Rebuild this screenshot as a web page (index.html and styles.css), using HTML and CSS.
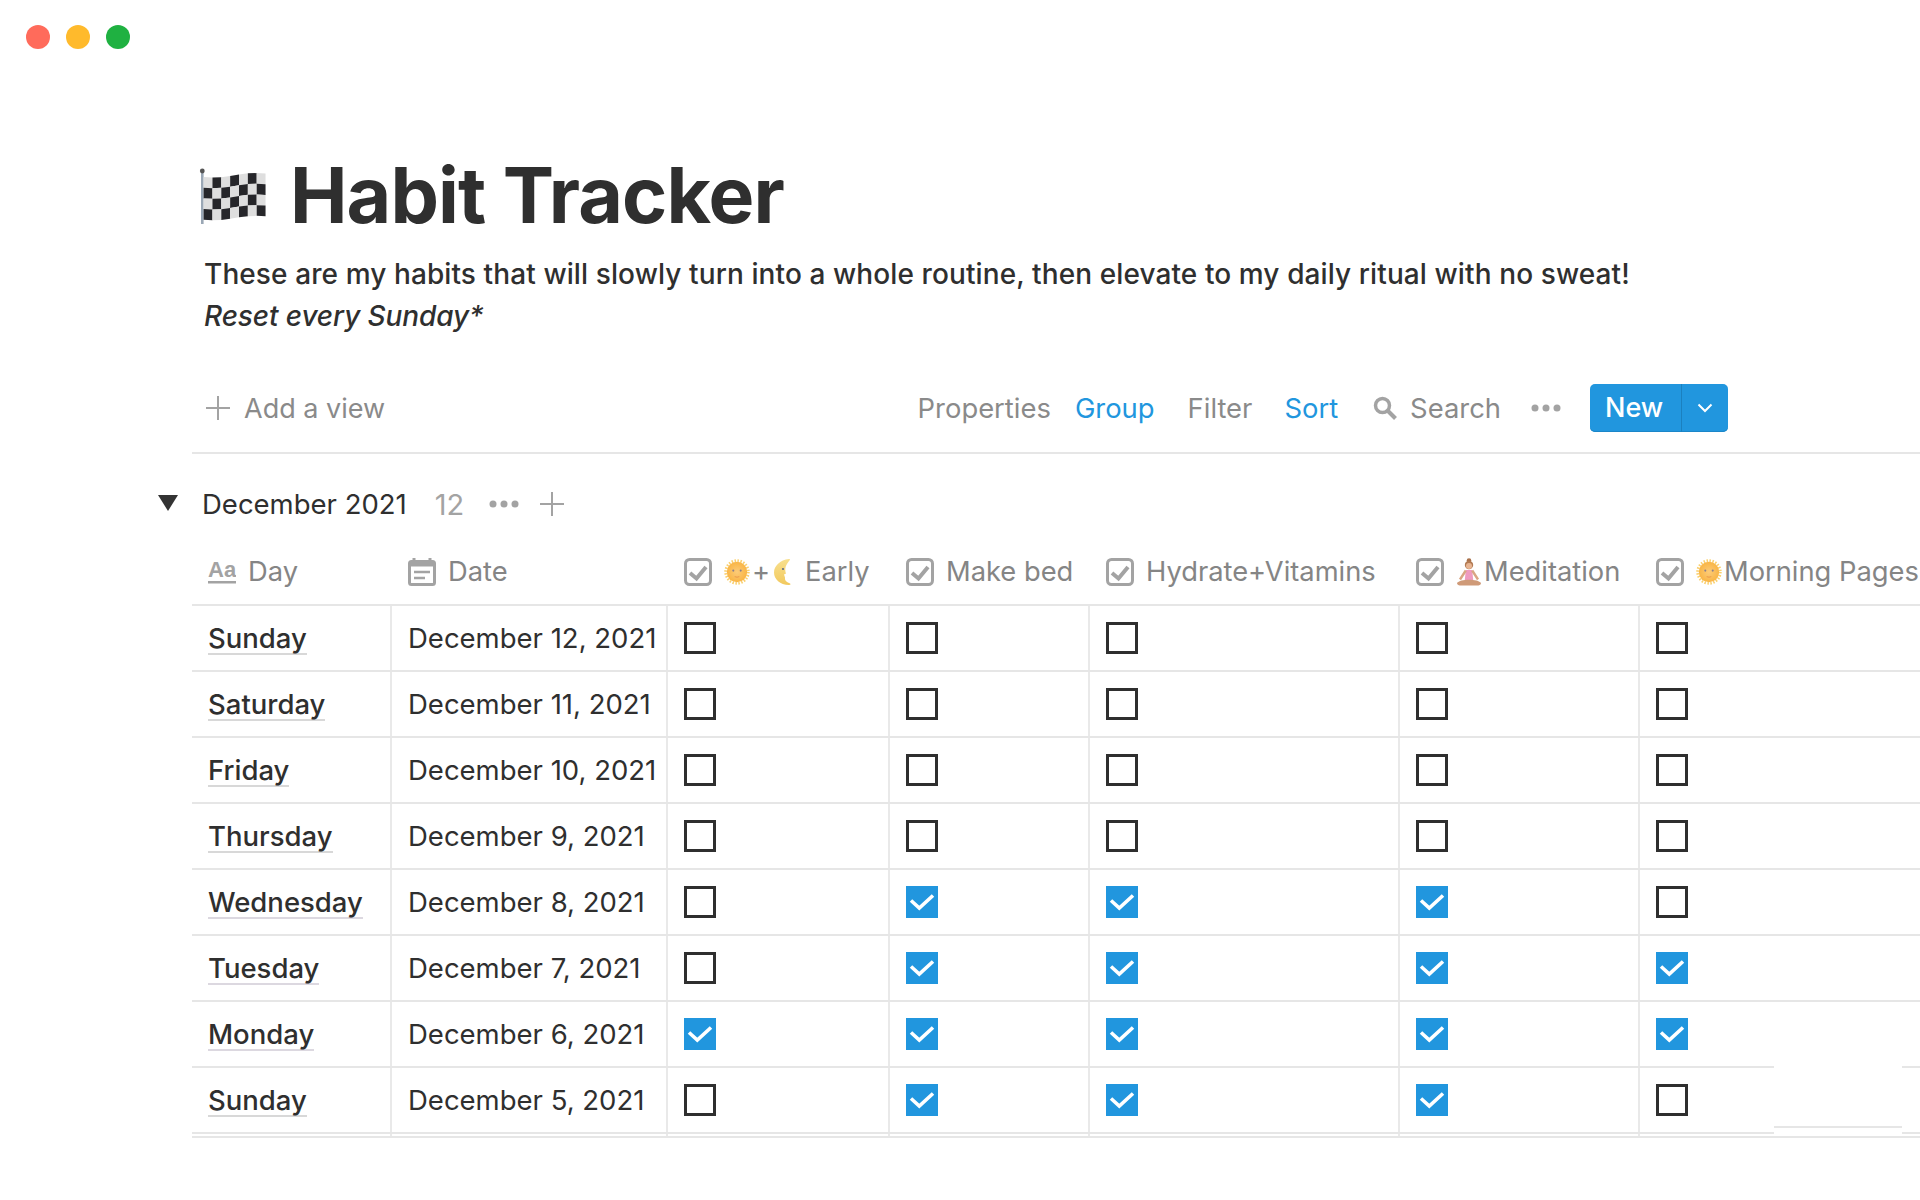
FILE: index.html
```html
<!DOCTYPE html>
<html lang="en">
<head>
    <meta charset="UTF-8" />
    <title>Habit Tracker</title>
    <link rel="stylesheet" href="styles.css">
</head>
<body>
    <svg class="defs" width="0" height="0">
        <defs>
            <radialGradient id="sun-fill">
                <stop offset="0" stop-color="#fccb78"/>
                <stop offset="1" stop-color="#f9b545"/>
            </radialGradient>
            <linearGradient id="moon-fill" x1="0" y1="0" x2="0" y2="1">
                <stop offset="0" stop-color="#f8e08e"/>
                <stop offset="1" stop-color="#f2c95e"/>
            </linearGradient>
            <symbol id="sun" viewBox="0 0 28 28">
                <circle cx="14" cy="14" r="12.200" fill="none" stroke="#fad06e" stroke-width="3" stroke-dasharray="1.600 1.600"/>
                <circle cx="14" cy="14" r="11" fill="url(#sun-fill)"/>
                <circle cx="10" cy="12.500" r="1.100" fill="#8c7f8c"/>
                <circle cx="18" cy="12.500" r="1.100" fill="#8c7f8c"/>
                <path d="M11.500 19q2.500 1.200 5 0" stroke="#e8964a" stroke-width="1" fill="none"/>
            </symbol>
            <symbol id="prop-check" viewBox="0 0 28 28">
                <rect x="1.500" y="1.500" width="25" height="25" rx="4" fill="none" stroke="#a3a3a3" stroke-width="3"/>
                <path d="M6 15l6.500 5.500L22 9" fill="none" stroke="#a3a3a3" stroke-width="4"/>
            </symbol>
            <symbol id="tick" viewBox="0 0 32 32">
                <path d="M5 14.500l8.300 7.500L27 9.500" fill="none" stroke="#fff" stroke-width="3.600"/>
            </symbol>
            <symbol id="plus" viewBox="0 0 24 24">
                <path d="M12 0v24M0 12h24" stroke="#a3a3a3" stroke-width="2"/>
            </symbol>
            <symbol id="dots" viewBox="0 0 30 8">
                <circle cx="4" cy="4" r="3.500" fill="#a3a3a3"/>
                <circle cx="15" cy="4" r="3.500" fill="#a3a3a3"/>
                <circle cx="26" cy="4" r="3.500" fill="#a3a3a3"/>
            </symbol>
        </defs>
    </svg>

    <div class="traffic">
        <span class="light red"></span>
        <span class="light yellow"></span>
        <span class="light green"></span>
    </div>

    <header class="page-head">
        <h1 class="title">
            <svg class="flag" id="flag" viewBox="0 0 67 56"></svg>
            <span>Habit Tracker</span>
        </h1>
        <p class="desc first">These are my habits that will slowly turn into a whole routine, then elevate to my daily ritual with no sweat!</p>
        <p class="desc reset">Reset every Sunday*</p>
    </header>

    <div class="toolbar">
        <div class="add-view">
            <svg class="ico-plus"><use href="#plus"/></svg>
            <span>Add a view</span>
        </div>
        <div class="actions">
            <span class="act props">Properties</span>
            <span class="act blue">Group</span>
            <span class="act filter">Filter</span>
            <span class="act blue sort">Sort</span>
            <span class="act search">
                <svg class="ico-search" viewBox="0 0 24 24"><circle cx="9.500" cy="9.500" r="7" fill="none" stroke="#a3a3a3" stroke-width="3.500"/><path d="M14.500 14.500l8 8" stroke="#a3a3a3" stroke-width="4"/></svg>
                Search
            </span>
            <svg class="ico-dots toolbar-dots"><use href="#dots"/></svg>
            <div class="new-btn">
                <span class="new-label">New</span>
                <span class="new-arrow">
                    <svg width="16" height="10" viewBox="0 0 16 10"><path d="M1.500 1.500L8 8l6.500-6.500" fill="none" stroke="#fff" stroke-width="2"/></svg>
                </span>
            </div>
        </div>
    </div>

    <div class="group-row">
        <svg class="caret" viewBox="0 0 20 16"><path d="M0 0h20L10 16z" fill="#333"/></svg>
        <span class="group-name">December 2021</span>
        <span class="group-count">12</span>
        <svg class="ico-dots"><use href="#dots"/></svg>
        <svg class="ico-plus"><use href="#plus"/></svg>
    </div>

    <div class="table-wrap">
        <div class="table">
            <div class="row head">
                <div class="cell">
                    <svg class="prop" viewBox="0 0 28 28"><text x="0" y="19" class="aa">Aa</text><rect x="0" y="23" width="28" height="2.500" fill="#a3a3a3"/></svg>
                    <span>Day</span>
                </div>
                <div class="cell">
                    <svg class="prop" viewBox="0 0 28 28"><path d="M6 0v4M22 0v4" stroke="#a3a3a3" stroke-width="3"/><rect x="1.500" y="3.500" width="25" height="23" rx="2" fill="none" stroke="#a3a3a3" stroke-width="3"/><rect x="1.500" y="3.500" width="25" height="5" fill="#a3a3a3"/><path d="M6 14h16M6 20h11" stroke="#a3a3a3" stroke-width="2.500"/></svg>
                    <span>Date</span>
                </div>
                <div class="cell">
                    <svg class="prop"><use href="#prop-check"/></svg>
                    <svg class="emoji"><use href="#sun"/></svg>
                    <span class="plus-txt">+</span>
                    <svg class="emoji moon" viewBox="0 0 18 28"><path d="M15 1C6 2 0 8 0 14.500S6 27 15 27c2 0 2-1.500 0-2-3-1-4.500-3-4-5.500l-1-3 2-1c-1.500-4-.5-8 2-11 1.500-2 3-3.500 1-3.500z" fill="url(#moon-fill)"/><circle cx="9" cy="11" r="1.100" fill="#5d6b85"/></svg>
                    <span class="early">Early</span>
                </div>
                <div class="cell">
                    <svg class="prop"><use href="#prop-check"/></svg>
                    <span>Make bed</span>
                </div>
                <div class="cell">
                    <svg class="prop"><use href="#prop-check"/></svg>
                    <span>Hydrate+Vitamins</span>
                </div>
                <div class="cell tight">
                    <svg class="prop"><use href="#prop-check"/></svg>
                    <svg class="emoji" viewBox="0 0 26 28">
                        <circle cx="13" cy="2.500" r="2.300" fill="#a9714b"/>
                        <circle cx="13" cy="7" r="4.200" fill="#b27a52"/>
                        <circle cx="13" cy="8" r="3" fill="#e8b592"/>
                        <path d="M9.800 12h6.400l1 10H8.800z" fill="#ef9ac0"/>
                        <path d="M9.800 12.500L4 21.500M16.200 12.500l5.800 9" stroke="#d9a583" stroke-width="2.400"/>
                        <path d="M1 25c3-4.500 21-4.500 24 0 0 2-2 2.500-4 2.500H5c-2 0-4-.5-4-2.500z" fill="#cf9a78"/>
                    </svg>
                    <span>Meditation</span>
                </div>
                <div class="cell tight">
                    <svg class="prop"><use href="#prop-check"/></svg>
                    <svg class="emoji"><use href="#sun"/></svg>
                    <span>Morning Pages</span>
                </div>
            </div>

            <div id="rows"></div>
        </div>
        <div class="patch"></div>
    </div>

    <script>
        // day, date, underline tint, then the five habit checkboxes
        const data = [
            ['Sunday', 'December 12, 2021', 'grey', [0, 0, 0, 0, 0]],
            ['Saturday', 'December 11, 2021', 'grey', [0, 0, 0, 0, 0]],
            ['Friday', 'December 10, 2021', 'grey', [0, 0, 0, 0, 0]],
            ['Thursday', 'December 9, 2021', 'grey', [0, 0, 0, 0, 0]],
            ['Wednesday', 'December 8, 2021', 'lilac', [0, 1, 1, 1, 0]],
            ['Tuesday', 'December 7, 2021', 'lilac', [0, 1, 1, 1, 1]],
            ['Monday', 'December 6, 2021', 'lilac', [1, 1, 1, 1, 1]],
            ['Sunday', 'December 5, 2021', 'grey', [0, 1, 1, 1, 0]],
        ];

        const box = (on) => on
            ? '<span class="box on"><svg><use href="#tick"/></svg></span>'
            : '<span class="box"></span>';

        const rows = data.map(([day, date, tint, checks]) => `
            <div class="row">
                <div class="cell"><span class="day ${tint}">${day}</span></div>
                <div class="cell">${date}</div>
                ${checks.map((c) => `<div class="cell">${box(c)}</div>`).join('')}
            </div>`).join('');

        // short last row: the table's double line at the bottom
        const tail = `<div class="row tail">${'<div class="cell"></div>'.repeat(7)}</div>`;
        document.getElementById('rows').innerHTML = rows + tail;

        // wavy chequered flag, 7 x 4 squares
        const wave = (x) => 1.2 * Math.sin((x / 62) * Math.PI * 2) - (3.5 * x) / 62;
        let flag = '<rect x="2" y="3" width="2.600" height="53" fill="#9aa7b5"/><circle cx="3.300" cy="3" r="2.400" fill="#555"/>';
        for (let i = 0; i < 7; i++) {
            for (let j = 0; j < 4; j++) {
                const x0 = 4.600 + i * 8.850;
                const x1 = x0 + 8.850;
                const y0 = 9 + j * 10.700;
                const y1 = y0 + 10.700;
                const fill = (i + j) % 2 ? '#26262a' : '#dedede';
                flag += `<polygon fill="${fill}" points="${x0},${y0 + wave(x0 - 4.600)} ${x1},${y0 + wave(x1 - 4.600)} ${x1},${y1 + wave(x1 - 4.600)} ${x0},${y1 + wave(x0 - 4.600)}"/>`;
            }
        }
        document.getElementById('flag').innerHTML = flag;
    </script>
</body>
</html>
```

FILE: styles.css
```css
/* page */
html, body {
    margin: 0;
    padding: 0;
    height: 1200px;
    overflow: hidden;
}

body {
    font-family: Inter, "Liberation Sans", sans-serif;
    color: #2f2f2f;
    background: #fff;
    font-size: 27px;
}

.defs {
    display: block;
    height: 0;
}

/* window buttons */
.traffic {
    display: flex;
    gap: 16px;
    padding: 25px 0 0 26px;
    height: 24px;
}

.light {
    width: 24px;
    height: 24px;
    border-radius: 50%;
}

.red { background: #ff6b5b; }
.yellow { background: #ffba2c; }
.green { background: #1fb141; }

/* title block */
.page-head {
    padding: 101px 0 0 199px;
}

.title {
    display: flex;
    align-items: center;
    gap: 24px;
    margin: 0;
    height: 90px;
    font-size: 77px;
    line-height: 90px;
    font-weight: 700;
    letter-spacing: -0.9px;
}

.flag {
    width: 67px;
    height: 56px;
    margin-top: 2px;
}

.desc {
    margin: 0 0 0 5px;
    font-size: 28px;
    line-height: 42px;
    font-weight: 500;
    letter-spacing: 0.1px;
}

.desc.first {
    margin-top: 13px;
}

.reset {
    font-style: italic;
    letter-spacing: -0.1px;
}

/* view toolbar */
.toolbar {
    display: flex;
    justify-content: space-between;
    align-items: center;
    margin: 47px 0 0 192px;
    padding: 0 192px 20px 14px;
    height: 48px;
    border-bottom: 2px solid #e6e6e6;
    color: #8a8a8a;
}

.add-view {
    display: flex;
    align-items: center;
    gap: 14px;
}

.ico-plus {
    width: 24px;
    height: 24px;
}

.actions {
    display: flex;
    align-items: center;
    font-size: 27.4px;
}

.act {
    margin-right: 33px;
}

.props {
    margin-right: 24px;
}

.filter {
    margin-right: 32px;
}

.sort {
    margin-right: 35px;
}

.blue {
    color: #2196de;
}

.search {
    display: flex;
    align-items: center;
    gap: 13px;
    margin-right: 30px;
}

.ico-search {
    width: 24px;
    height: 24px;
}

.ico-dots {
    width: 30px;
    height: 8px;
}

.toolbar-dots {
    margin-right: 29px;
}

.new-btn {
    display: flex;
    height: 48px;
    border-radius: 5px;
    background: #2196de;
    color: #fff;
    font-size: 27px;
    font-weight: 500;
    line-height: 48px;
    box-shadow: inset 0 -1px 0 #1b86c8;
}

.new-label {
    padding: 0 16px 0 15px;
    width: 60px;
}

.new-arrow {
    display: flex;
    align-items: center;
    justify-content: center;
    width: 46px;
    border-left: 1px solid #1b80bf;
}

/* group heading */
.group-row {
    display: flex;
    align-items: center;
    height: 50px;
    margin-top: 25px;
    padding-left: 158px;
}

.caret {
    width: 20px;
    height: 16px;
    margin: 0 24px 2px 0;
}

.group-name {
    font-size: 27.500px;
}

.group-count {
    color: #a3a3a3;
    font-size: 29px;
    margin-left: 28px;
}

.group-row .ico-dots {
    margin-left: 25px;
}

.group-row .ico-plus {
    margin-left: 21px;
}

/* table */
.table-wrap {
    position: relative;
    margin: 10px 0 0 192px;
    font-size: 27.500px;
}

.table {
    width: 1728px;
}

.row {
    display: grid;
    grid-template-columns: 200px 276px 222px 200px 310px 240px 280px;
    height: 66px;
    box-sizing: border-box;
    border-bottom: 2px solid #e6e6e6;
}

.row.head {
    height: 67px;
    color: #858585;
    font-size: 27.300px;
}

.row.tail {
    height: 4px;
}

.cell {
    display: flex;
    align-items: center;
    padding-left: 16px;
    border-right: 2px solid #e9e9e9;
    white-space: nowrap;
    overflow: hidden;
}

.cell:last-child {
    border-right: none;
}

.head .cell {
    border-right: none;
    gap: 12px;
}

.tight span {
    margin-left: -10px;
}

.prop {
    width: 28px;
    height: 28px;
    flex: none;
}

.aa {
    font-family: "Liberation Sans", sans-serif;
    font-size: 22px;
    font-weight: 700;
    fill: #a3a3a3;
}

.emoji {
    width: 26px;
    height: 28px;
    flex: none;
}

.moon {
    width: 18px;
    margin-left: -8px;
}

.plus-txt {
    margin-left: -10px;
}

.early {
    margin-left: 1px;
}

.day {
    margin-top: 2px;
    font-weight: 500;
    border-bottom: 2px solid #d8d8d8;
    line-height: 29px;
}

.day.lilac {
    border-bottom-color: #dcd8e0;
}

.box {
    display: block;
    width: 32px;
    height: 32px;
    box-sizing: border-box;
    border: 3px solid #2f2f2f;
}

.box.on {
    border: none;
    background: #2196de;
}

.box svg {
    display: block;
    width: 32px;
    height: 32px;
}

/* pale smudge left over the bottom right of the table */
.patch {
    position: absolute;
    left: 1582px;
    top: 527px;
    width: 128px;
    height: 69px;
    background: #fff;
}

.patch::after {
    content: "";
    position: absolute;
    left: 0;
    right: 0;
    top: 60px;
    height: 2px;
    background: #e6e6e6;
}
```
